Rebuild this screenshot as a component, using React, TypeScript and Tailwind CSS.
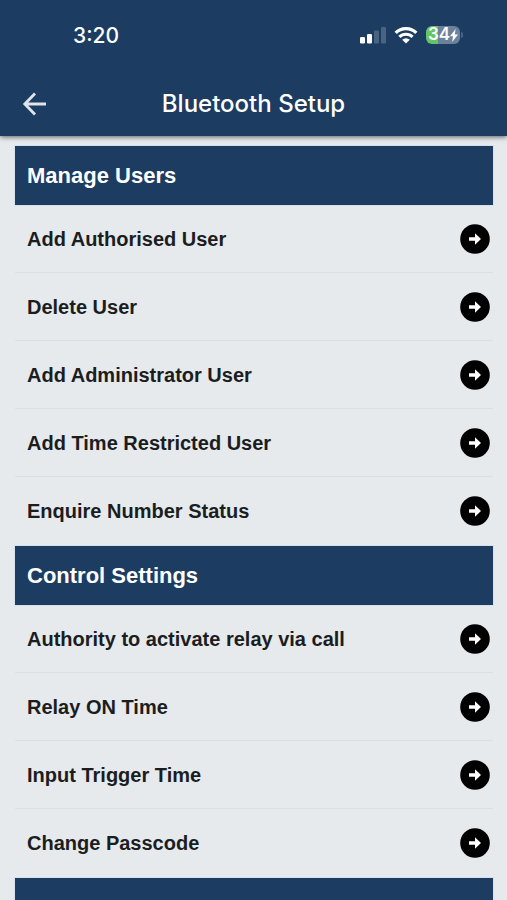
const sections = [
  {
    title: "Manage Users",
    items: [
      "Add Authorised User",
      "Delete User",
      "Add Administrator User",
      "Add Time Restricted User",
      "Enquire Number Status",
    ],
  },
  {
    title: "Control Settings",
    items: [
      "Authority to activate relay via call",
      "Relay ON Time",
      "Input Trigger Time",
      "Change Passcode",
    ],
  },
];

function SignalIcon() {
  return (
    <svg width="26" height="17" viewBox="0 0 26 17" fill="#fff" aria-hidden="true">
      <rect x="0" y="10" width="5" height="6.5" rx="1.3" />
      <rect x="7" y="7" width="5" height="9.5" rx="1.3" />
      <rect x="14" y="3.5" width="5" height="13" rx="1.3" opacity=".2" />
      <rect x="21" y="0" width="5" height="16.5" rx="1.3" opacity=".2" />
    </svg>
  );
}

function WifiIcon() {
  return (
    <svg width="24" height="17" viewBox="0 0 24 17" fill="none" stroke="#fff" aria-hidden="true">
      <path d="M1.7 5.9a14.6 14.6 0 0 1 20.6 0" strokeWidth="3.3" />
      <path d="M5.4 9.9a9.3 9.3 0 0 1 13.2 0" strokeWidth="3" />
      <path d="M8.2 12.8a5.4 5.4 0 0 1 7.6 0L12 16.6Z" fill="#fff" stroke="none" />
    </svg>
  );
}

function BatteryIcon() {
  return (
    <div className="flex items-center gap-px" role="img" aria-label="Battery 34 percent, charging">
      <div className="flex h-[18px] w-[34px] items-center justify-center rounded-[6px] bg-linear-to-r from-[#65c466] from-35% to-[#6c819c] to-35% font-['Inter','Liberation_Sans',sans-serif] text-[17px] font-semibold text-white">
        34
        <svg width="8" height="13" viewBox="0 0 8 13" fill="#fff" aria-hidden="true">
          <path d="M5.6 0 0 7.3h3L2.2 13 8 5.5H4.8Z" />
        </svg>
      </div>
      <div className="h-[6px] w-[2px] rounded-r-full bg-[#4c6484]" />
    </div>
  );
}

function ArrowCircle() {
  return (
    <svg width="30" height="30" viewBox="0 0 30 30" aria-hidden="true">
      <circle cx="15" cy="15" r="14.8" fill="#000" />
      <path d="M9 13.2h6V9.2l6 5.8-6 5.8v-4H9Z" fill="#fff" />
    </svg>
  );
}

function SectionBar({ title }: { title?: string }) {
  return (
    <h2 className="flex h-[59px] items-center bg-[#1c3c62] px-3 text-[22px] font-bold text-white outline outline-[#c9dced]/60">
      {title}
    </h2>
  );
}

export default function App() {
  return (
    <div className="flex h-screen flex-col overflow-hidden bg-[#e6eaed] font-['Liberation_Sans',Arial,sans-serif]">
      <header className="relative shrink-0 bg-[#1c3c62] font-['Inter','Liberation_Sans',sans-serif] text-white shadow-[0_1px_5px_rgba(0,0,0,0.6)]">
        <div className="flex h-[72px] items-center justify-between pr-11 pl-[73px]">
          <span className="text-[21px] font-medium">3:20</span>
          <div className="flex items-center gap-2 pb-[2px]">
            <SignalIcon />
            <WifiIcon />
            <BatteryIcon />
          </div>
        </div>
        <div className="grid h-16 grid-cols-[48px_1fr_48px] items-center px-[10px]">
          <button type="button" aria-label="Back" className="flex h-12 items-center justify-center">
            <svg width="24" height="24" viewBox="0 0 24 24" fill="none" stroke="#dfe4ea" strokeWidth="2.8" aria-hidden="true">
              <path d="M24 12H3M13 1.5 2.8 12 13 22.5" />
            </svg>
          </button>
          <h1 className="text-center text-2xl font-medium">Bluetooth Setup</h1>
        </div>
      </header>

      <main className="min-h-0 flex-1 overflow-hidden px-[14px] pt-[10px]">
        <div className="pl-px">
          {sections.map((section) => (
            <section key={section.title}>
              <SectionBar title={section.title} />
              <ul className="divide-y divide-[#dbdfe2] pb-[2px]">
                {section.items.map((item) => (
                  <li key={item}>
                    <button
                      type="button"
                      className="flex h-[67px] w-full items-center justify-between pr-[3px] pl-3 text-left text-xl font-bold text-[#1b1d1f]"
                    >
                      {item}
                      <ArrowCircle />
                    </button>
                  </li>
                ))}
              </ul>
            </section>
          ))}
          <SectionBar />
        </div>
      </main>
    </div>
  );
}
